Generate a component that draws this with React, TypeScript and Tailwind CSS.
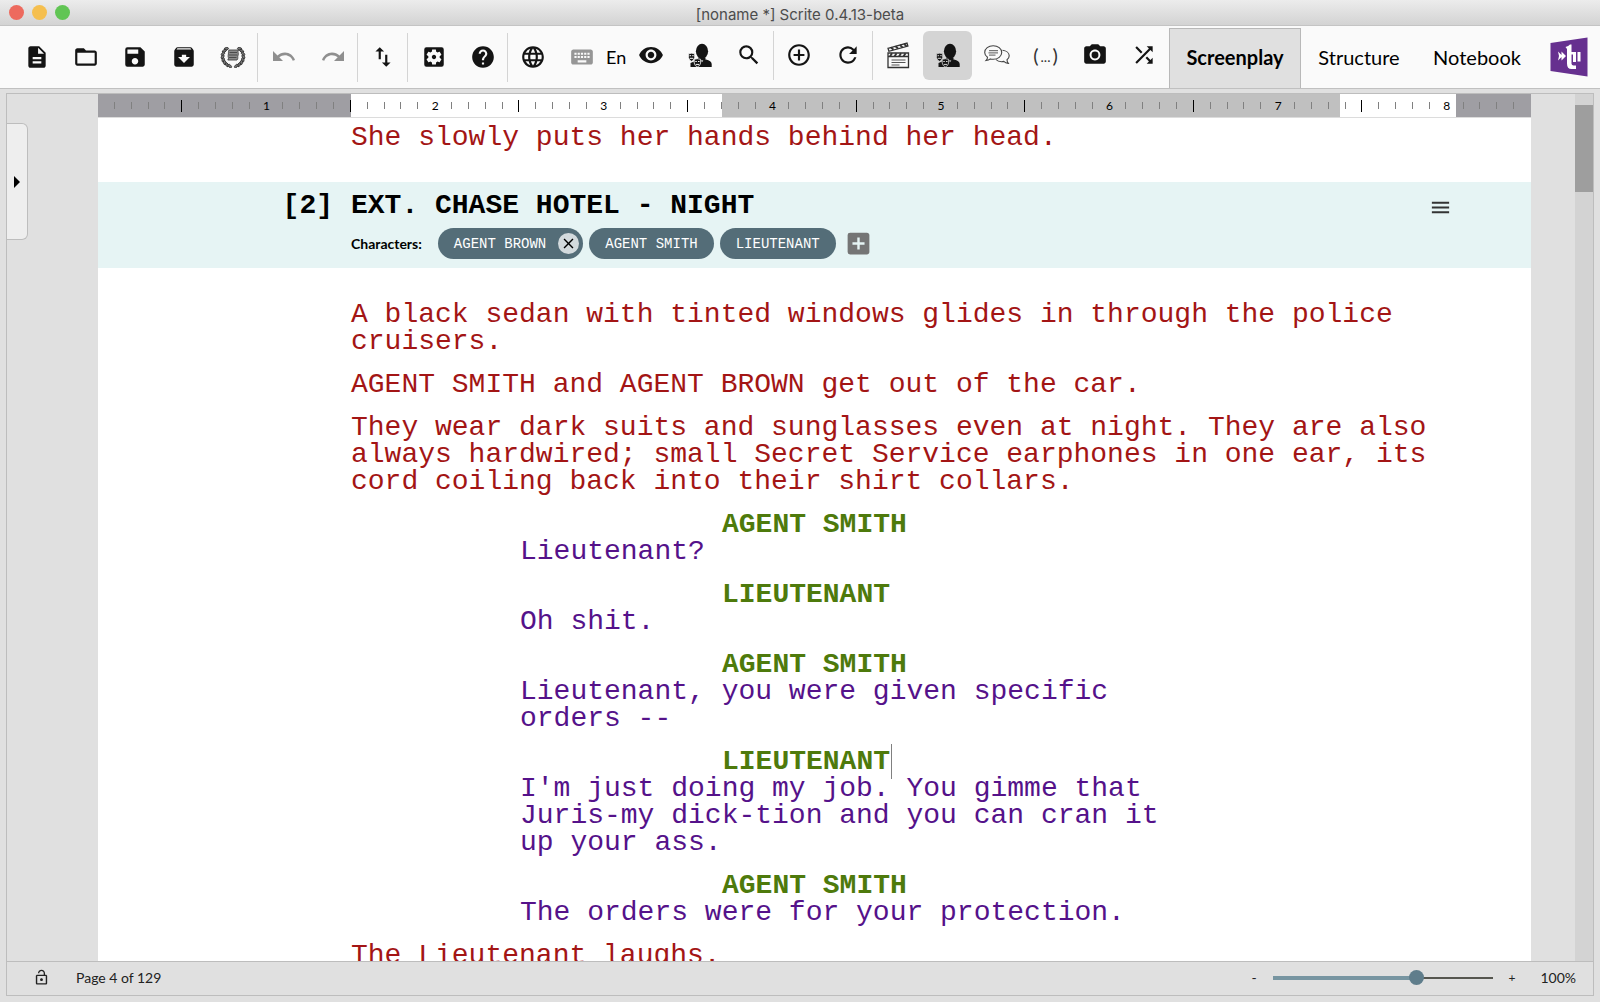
import React from "react";
import {
  MdDescription,
  MdFolderOpen,
  MdSave,
  MdArchive,
  MdSwapVert,
  MdSettingsApplications,
  MdHelp,
  MdLanguage,
  MdKeyboard,
  MdVisibility,
  MdSearch,
  MdAddCircleOutline,
  MdRefresh,
  MdCameraAlt,
  MdShuffle,
  MdAddBox,
  MdMenu,
  MdLockOpen,
  MdClose,
} from "react-icons/md";

const MONO = "font-['Liberation_Mono',monospace]";

function ToolButton({
  label,
  children,
  active = false,
}: {
  label: string;
  children: React.ReactNode;
  active?: boolean;
}) {
  return (
    <button
      type="button"
      aria-label={label}
      className={`flex h-[49px] w-[49px] shrink-0 items-center justify-center rounded-md text-[#141414] ${
        active ? "bg-[#d4d4d4]" : ""
      }`}
    >
      {children}
    </button>
  );
}

function Divider({ spaced = false }: { spaced?: boolean }) {
  return <div className={`h-[49px] w-px shrink-0 bg-[#d4d4d4] ${spaced ? "mr-px" : ""}`} />;
}

function LaurelIcon() {
  const leaves = [52, 34, 16, -2, -20, -38, -56, -74];
  return (
    <svg width="26" height="22" viewBox="0 0 26 22" fill="none">
      {leaves.map((a) => (
        <g key={a} fill="#777" stroke="#2c2c2c" strokeWidth=".8">
          <ellipse cx="2.600" cy="10.500" rx="1.200" ry="2.200" transform={`rotate(${a} 12.500 10.500) rotate(28 2.600 10.500)`} />
          <ellipse cx="23.400" cy="10.500" rx="1.200" ry="2.200" transform={`rotate(${-a} 13.500 10.500) rotate(-28 23.400 10.500)`} />
        </g>
      ))}
      <path d="M9 4h9.500c-1.200 2 .4 3.200-.4 5S18.500 12.300 17 14H7.800c1.500-1.600-.1-3 .4-4.800S8 6 9 4Z" fill="#8a8a8a" stroke="#444" strokeWidth=".9" />
      <path d="M9.500 6.500h7.500M9 9h8M9 11.500h7.500" stroke="#444" strokeWidth=".9" />
    </svg>
  );
}

function UndoIcon({ flip = false }: { flip?: boolean }) {
  return (
    <svg width="22" height="12" viewBox="0 0 22 12" className={flip ? "-scale-x-100" : ""}>
      <path d="M0 0v10h10L6.300 6.300C7.900 5 9.800 4.200 12 4.200c3.600 0 6.600 2.300 7.700 5.500l2.300-.8C20.500 4.700 16.600 1.600 12 1.600c-2.900 0-5.500 1.100-7.500 2.900Z" fill="#8f8f8f" />
    </svg>
  );
}

function CharacterIcon({ gap }: { gap: string }) {
  return (
    <svg width="24" height="25" viewBox="0 0 24 25" fill="#141414">
      <ellipse cx="14" cy="8.200" rx="6.100" ry="7.400" />
      <path d="M10 14.500h7.500v3H10Z" />
      <path d="M2.500 24v-4l7-3 4.500.5 4-1c3.500.8 5.700 2.200 5.700 4.500v3Z" />
      <path d="m13 17.600 1 1.600 1.200-1.600Z" fill={gap} />
      <path d="M.6 10.800q3-1.200 6 0v3.700q-.6 3.200-3 3.800-2.400-.6-3-3.800Z" stroke={gap} strokeWidth=".7" />
      <path d="M6.200 16.300q3.200-1.200 6.400 0v3.700q-.6 3.200-3.200 3.900-2.600-.7-3.200-3.900Z" stroke={gap} strokeWidth=".8" />
      <path d="M1.600 12.700h1.500M4.200 12.700h1.500M2 15.300h3.200M7.300 18.500h1.500M10 18.500h1.500M7.800 21.400h3.200" stroke={gap} strokeWidth="1" fill="none" />
    </svg>
  );
}

function ClapperIcon() {
  return (
    <svg width="23" height="27" viewBox="0 0 23 27" fill="none" stroke="#333" strokeWidth="1.300">
      <path d="m1 6.300 19-5.200.9 3-19 5.200Z" />
      <path d="m4 5.500 2.500 2.200M8.500 4.300 11 6.500M13 3l2.500 2.300M17 2l2.500 2" strokeWidth="1.800" />
      <path d="M1 11h20.500v14.500H1ZM1 14.500h20.500" />
      <path d="m3 14.500 2-3.300m2.500 3.300 2-3.300m2.500 3.300 2-3.300m2.500 3.300 2-3.300" strokeWidth="1.800" />
      <path d="M4.500 18h14M4.500 20.500h14M4.500 23h8" strokeWidth="1" stroke="#555" />
    </svg>
  );
}

function DialogueIcon() {
  return (
    <svg width="26" height="20" viewBox="0 0 26 20" fill="none" stroke="#444" strokeWidth="1.100">
      <path d="M3.500 12.300C1.700 11.100.7 9.400.7 7.500.7 3.700 4.500.7 9.200.7s8.500 3 8.500 6.800-3.800 6.800-8.500 6.800c-1 0-2-.1-2.900-.4-1 .9-2.300 1.500-4.200 1.600 1-.9 1.400-2 1.400-3.200Z" />
      <path d="M18.500 5.200c3.800.4 6.700 2.700 6.700 5.600 0 1.500-.8 2.900-2.200 3.900 0 1.500.5 2.600 1.300 3.700-1.900-.2-3.400-.9-4.500-2-.7.200-1.500.3-2.300.3-2.300 0-4.300-.8-5.600-2.200" />
      <path d="M5 5.700h9M4.500 7.900h9.500M5 10.100h6.500" strokeWidth=".9" />
    </svg>
  );
}

function Logo() {
  return (
    <svg width="38" height="41" viewBox="0 0 38 41" role="img" aria-label="Logo">
      <path d="M.5 6 37.500.500v39L.500 34Z" fill="#66308f" />
      <path d="m8 14.500 3.500 3.500v-3.500L16 19l-4.500 4.500V20L8 23.500l1-4.500Z" fill="#fff" />
      <path d="M15.500 10q3-.6 4.500-2.500h1.500V15H25v2.500h-3.500v9.300q.2 1.700 2 1.700H26V32h-4.500q-4.500 0-4.500-5.500V12Z" fill="#fff" />
      <path d="M23 15h3v10h-3ZM27.500 15h3v9.500h-3Z" fill="#fff" />
    </svg>
  );
}

function Ruler() {
  const cells = Array.from({ length: 85 }, (_, i) => i + 1);
  return (
    <div className="relative z-0 h-[23px] w-full bg-[#c0c0c0]">
      <div className="absolute inset-0 -z-10 flex">
        <div className="w-[17.650%] bg-[#9f9ea3]" />
        <div className="w-[25.900%] bg-white" />
        <div className="flex-1" />
        <div className="w-[8.150%] bg-white" />
        <div className="w-[5.200%] bg-[#9f9ea3]" />
      </div>
      <div className="flex h-full items-center">
        {cells.map((n) => (
          <div key={n} className="flex h-3 min-w-0 flex-1 items-center justify-end">
            {n === 85 ? null : n % 10 === 0 ? (
              <span className="flex w-0 justify-center font-['Lato',sans-serif] text-xs leading-none">{n / 10}</span>
            ) : n % 10 === 5 ? (
              <span className="h-3 w-px bg-black" />
            ) : (
              <span className="h-[7px] w-px bg-[#808080]" />
            )}
          </div>
        ))}
      </div>
    </div>
  );
}

function Action({ children }: { children: React.ReactNode }) {
  return <p className="mr-16 ml-[253px] text-[#a31515]">{children}</p>;
}

function Speech({
  name,
  caret = false,
  children,
}: {
  name: string;
  caret?: boolean;
  children: React.ReactNode;
}) {
  return (
    <div>
      <p className="ml-[624px] flex font-bold text-[#4e7a0c]">
        {name}
        {caret && <span className="-my-1 ml-px w-px bg-[#808080]" />}
      </p>
      <p className="mr-[340px] ml-[422px] text-[#55128a]">{children}</p>
    </div>
  );
}

function Chip({ name, removable = false }: { name: string; removable?: boolean }) {
  return (
    <span className={`flex h-[31px] items-center gap-3 rounded-full bg-[#546d78] pl-4 ${removable ? "pr-1" : "pr-4"}`}>
      <span className={`${MONO} text-sm leading-none text-white`}>{name}</span>
      {removable && (
        <button type="button" aria-label={`Remove ${name}`} className="flex size-[21px] items-center justify-center rounded-full bg-[#d3dadd]">
          <MdClose size={17} />
        </button>
      )}
    </span>
  );
}

export default function App() {
  return (
    <div className="flex h-screen flex-col overflow-hidden bg-[#e0e0e0] font-['Lato',sans-serif] text-black">
      <header className="relative flex h-[26px] shrink-0 items-center justify-center border-b border-[#c4c4c4] bg-linear-to-b from-[#ececec] to-[#d3d3d3]">
        <div className="absolute left-[9px] flex gap-2">
          <span className="size-[15px] rounded-full bg-[#ed6a5e]" />
          <span className="size-[15px] rounded-full bg-[#f5bf4f]" />
          <span className="size-[15px] rounded-full bg-[#61c554]" />
        </div>
        <h1 className="pt-1 font-['Inter',sans-serif] text-[15px] leading-5 text-[#4c4c4c]">[noname *] Scrite 0.4.13-beta</h1>
      </header>

      <div className="flex h-[63px] shrink-0 items-center border-b border-[#c0c0c0] bg-[#fafafa] pl-3">
        <ToolButton label="New"><MdDescription size={26} /></ToolButton>
        <ToolButton label="Open"><MdFolderOpen size={26} /></ToolButton>
        <ToolButton label="Save"><MdSave size={26} /></ToolButton>
        <ToolButton label="Archive"><MdArchive size={26} /></ToolButton>
        <ToolButton label="Library"><LaurelIcon /></ToolButton>
        <Divider spaced />
        <ToolButton label="Undo"><UndoIcon /></ToolButton>
        <ToolButton label="Redo"><UndoIcon flip /></ToolButton>
        <Divider />
        <ToolButton label="Import and export"><MdSwapVert size={26} /></ToolButton>
        <Divider spaced />
        <ToolButton label="Settings"><MdSettingsApplications size={26} /></ToolButton>
        <ToolButton label="Help"><MdHelp size={26} /></ToolButton>
        <Divider />
        <ToolButton label="Language"><MdLanguage size={26} /></ToolButton>
        <ToolButton label="Keyboard"><MdKeyboard size={26} color="#969696" /></ToolButton>
        <span className="w-5 text-lg">En</span>
        <div className="flex flex-1 items-center pb-1">
          <ToolButton label="Preview"><MdVisibility size={26} /></ToolButton>
          <ToolButton label="Characters"><CharacterIcon gap="#fafafa" /></ToolButton>
          <ToolButton label="Search"><MdSearch size={26} /></ToolButton>
          <Divider />
          <ToolButton label="Add scene"><MdAddCircleOutline size={26} /></ToolButton>
          <ToolButton label="Reload"><MdRefresh size={26} /></ToolButton>
          <Divider spaced />
          <ToolButton label="Scene heading"><ClapperIcon /></ToolButton>
          <ToolButton label="Character" active><CharacterIcon gap="#d4d4d4" /></ToolButton>
          <ToolButton label="Dialogue"><DialogueIcon /></ToolButton>
          <ToolButton label="Parenthetical">
            <span className="flex items-center gap-0.5 text-xl text-[#333]">(<span className="pt-1 text-sm">...</span>)</span>
          </ToolButton>
          <ToolButton label="Shot"><MdCameraAlt size={26} /></ToolButton>
          <ToolButton label="Transition"><MdShuffle size={26} /></ToolButton>
        </div>
        <nav className="flex h-full shrink-0 items-end text-xl">
          <button type="button" className="h-[60px] w-[132px] border border-b-0 border-[#b8b8b8] bg-[#e0e0e0] pb-1 font-bold">Screenplay</button>
          <button type="button" className="h-[60px] w-[116px] pb-0.5">Structure</button>
          <button type="button" className="h-[60px] w-[120px] pb-0.5">Notebook</button>
        </nav>
        <div className="mr-3 ml-[13px] shrink-0"><Logo /></div>
      </div>

      <main className="m-1.5 mt-1 flex min-h-0 flex-1 flex-col border border-[#bdbdbd]">
        <div className="flex min-h-0 flex-1">
          <aside className="w-[91px] shrink-0 pt-[29px]">
            <button type="button" aria-label="Open side panel" className="flex h-[117px] w-[21px] items-center justify-center rounded-r-md border border-l-0 border-[#bdbdbd] bg-[#eeeeee]">
              <svg width="6" height="12" viewBox="0 0 6 12"><path d="M0 0 6 6 0 12Z" /></svg>
            </button>
          </aside>

          <section className="flex min-w-0 flex-1 flex-col overflow-hidden bg-white">
            <Ruler />
            <div className={`${MONO} min-h-0 flex-1 overflow-hidden border-t border-[#dcdcdc] pt-1.5 text-[28px] leading-[27px]`}>
              <Action>She slowly puts her hands behind her head.</Action>

              <div className="mt-[31px] mb-[33px] flex h-[86px] bg-[#e6f4f4] pt-[10px]">
                <span className="w-[253px] shrink-0 pr-[18px] text-right font-bold">[2]</span>
                <div className="min-w-0 flex-1">
                  <h2 className="font-bold">EXT. CHASE HOTEL - NIGHT</h2>
                  <div className="mt-[9px] flex items-center gap-1.5">
                    <span className="mr-2.5 font-['Lato',sans-serif] text-sm font-bold">Characters:</span>
                    <Chip name="AGENT BROWN" removable />
                    <Chip name="AGENT SMITH" />
                    <Chip name="LIEUTENANT" />
                    <button type="button" aria-label="Add character" className="ml-0.5"><MdAddBox size={29} color="#757575" /></button>
                  </div>
                </div>
                <button type="button" aria-label="Scene menu" className="mt-1 mr-[79px] self-start"><MdMenu size={23} color="#333" /></button>
              </div>

              <div className="flex flex-col gap-4">
                <Action>A black sedan with tinted windows glides in through the police cruisers.</Action>
                <Action>AGENT SMITH and AGENT BROWN get out of the car.</Action>
                <Action>They wear dark suits and sunglasses even at night. They are also always hardwired; small Secret Service earphones in one ear, its cord coiling back into their shirt collars.</Action>
                <Speech name="AGENT SMITH">Lieutenant?</Speech>
                <Speech name="LIEUTENANT">Oh shit.</Speech>
                <Speech name="AGENT SMITH">Lieutenant, you were given specific orders --</Speech>
                <Speech name="LIEUTENANT" caret>I'm just doing my job. You gimme that Juris-my dick-tion and you can cran it up your ass.</Speech>
                <Speech name="AGENT SMITH">The orders were for your protection.</Speech>
                <Action>The Lieutenant laughs.</Action>
              </div>
            </div>
          </section>

          <div className="ml-11 w-[18px] shrink-0 bg-[#d3d3d3] pt-[11px]">
            <div className="h-[87px] bg-[#9e9e9e]" />
          </div>
        </div>

        <footer className="flex h-[34px] shrink-0 items-center border-t border-[#bdbdbd] pr-[17px] pb-0.5 pl-[26px] text-sm text-[#222]">
          <button type="button" aria-label="Unlock"><MdLockOpen size={17} /></button>
          <span className="ml-[26px]">Page 4 of 129</span>
          <button type="button" aria-label="Zoom out" className="ml-auto w-5">-</button>
          <div className="relative mx-[9px] flex h-4 w-[220px] items-center">
            <input
              type="range"
              aria-label="Zoom"
              min={0}
              max={100}
              defaultValue={66}
              className="absolute inset-0 z-10 m-0 w-full cursor-pointer opacity-0"
            />
            <span className="h-1 w-[144px] bg-[#7795a1]" />
            <span className="relative -mx-2 size-[15px] shrink-0 rounded-full bg-[#5f7d8b]" />
            <span className="h-0.5 flex-1 bg-[#55564f]" />
          </div>
          <button type="button" aria-label="Zoom in" className="w-5 text-xs">+</button>
          <span className="w-[54px] text-right">100%</span>
        </footer>
      </main>
    </div>
  );
}
